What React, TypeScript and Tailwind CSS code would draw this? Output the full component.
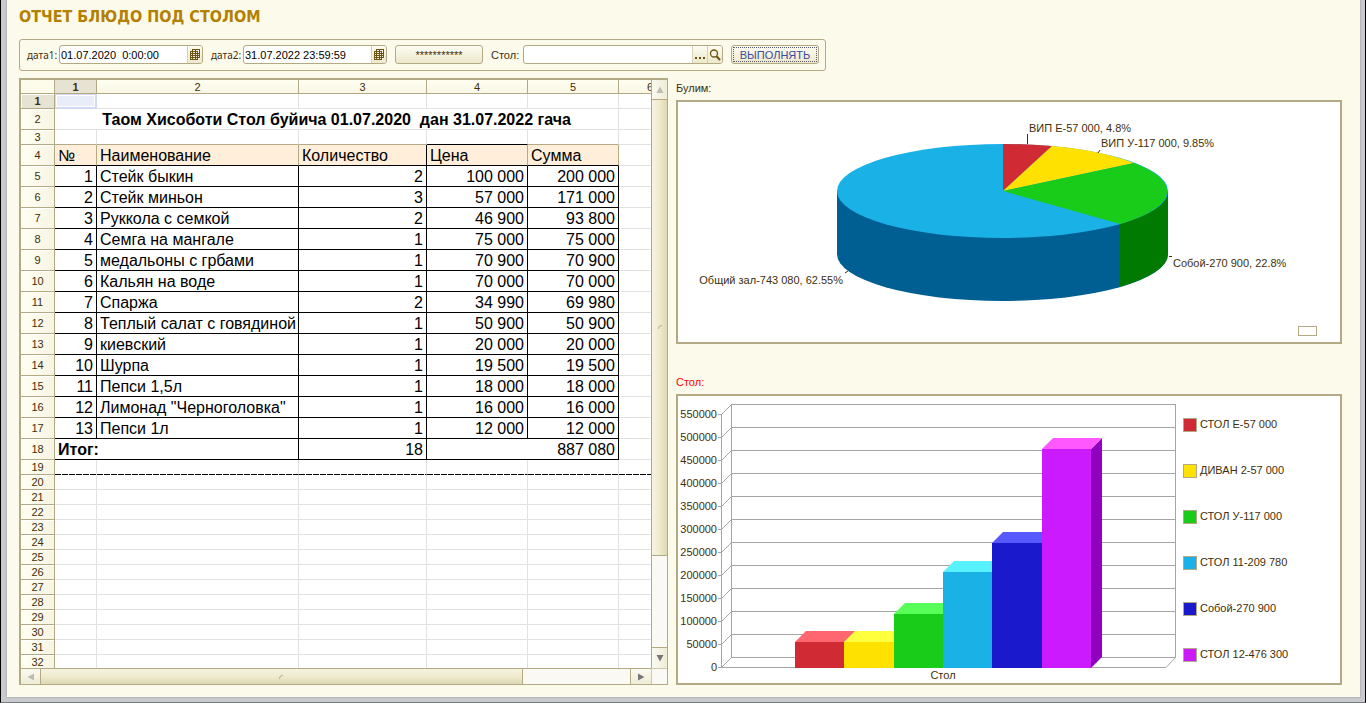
import { useState } from 'react';

interface Dish {
  name: string;
  count: number;
  price: string;
  sum: string;
}

interface Bar {
  label: string;
  x: number;
  y: number;
  width: number;
  front: string;
  top: string;
  side: string;
}

const dishes: Dish[] = [
  { name: 'Стейк быкин', count: 2, price: '100 000', sum: '200 000' },
  { name: 'Стейк миньон', count: 3, price: '57 000', sum: '171 000' },
  { name: 'Руккола с семкой', count: 2, price: '46 900', sum: '93 800' },
  { name: 'Семга на мангале', count: 1, price: '75 000', sum: '75 000' },
  { name: 'медальоны с грбами', count: 1, price: '70 900', sum: '70 900' },
  { name: 'Кальян на воде', count: 1, price: '70 000', sum: '70 000' },
  { name: 'Спаржа', count: 2, price: '34 990', sum: '69 980' },
  { name: 'Теплый салат с говядиной', count: 1, price: '50 900', sum: '50 900' },
  { name: 'киевский', count: 1, price: '20 000', sum: '20 000' },
  { name: 'Шурпа', count: 1, price: '19 500', sum: '19 500' },
  { name: 'Пепси 1,5л', count: 1, price: '18 000', sum: '18 000' },
  { name: 'Лимонад "Черноголовка"', count: 1, price: '16 000', sum: '16 000' },
  { name: 'Пепси 1л', count: 1, price: '12 000', sum: '12 000' },
];

const bars: Bar[] = [
  { label: 'СТОЛ Е-57 000', x: 117, y: 246, width: 49, front: '#d02b35', top: '#ff666f', side: '#8f0000' },
  { label: 'ДИВАН 2-57 000', x: 166, y: 246, width: 50, front: '#ffe100', top: '#ffff3e', side: '#bfa000' },
  { label: 'СТОЛ У-117 000', x: 216, y: 218, width: 49, front: '#1acc1a', top: '#58ff58', side: '#007a00' },
  { label: 'СТОЛ 11-209 780', x: 265, y: 176, width: 49, front: '#1ab1e6', top: '#58f2ff', side: '#005f92' },
  { label: 'Собой-270 900', x: 314, y: 147, width: 50, front: '#1a1acc', top: '#5858ff', side: '#00008f' },
  { label: 'СТОЛ 12-476 300', x: 364, y: 53, width: 49, front: '#cc1aff', top: '#ff58ff', side: '#8f00bf' },
];

const axis = [550000, 500000, 450000, 400000, 350000, 300000, 250000, 200000, 150000, 100000, 50000, 0];
const emptyRows = [20, 21, 22, 23, 24, 25, 26, 27, 28, 29, 30, 31, 32];

const line = 'border-[#e2e2e2]';
const raised = 'bg-linear-to-b from-[#fdfcf2] to-[#ece8cc]';

function RowHead({ n, active }: { n: number; active?: boolean }) {
  return (
    <th
      scope="row"
      className={`border-r border-b border-[#b3a985] p-0 text-center text-[11px] leading-[14px] text-[#3f2f0a] shadow-[inset_1px_1px_0_#ffffff] ${
        active ? 'bg-[#e6e3d3] font-bold' : 'bg-linear-to-r from-[#fffff2] to-[#f7f4e4] font-normal'
      }`}
    >
      {n}
    </th>
  );
}

function Blank({ count, border = line }: { count: number; border?: string }) {
  return (
    <>
      {Array.from({ length: count }, (_, i) => (
        <td key={i} className={`border-r border-b p-0 ${border}`}></td>
      ))}
    </>
  );
}

function Sheet() {
  const cell = 'border-r border-b border-black px-[3px] pt-px pb-0';

  return (
    <table className="w-[661px] table-fixed border-separate border-spacing-0 bg-white text-base leading-[19px] whitespace-nowrap text-black">
      <colgroup>
        <col className="w-[34px]" />
        <col className="w-[42px]" />
        <col className="w-[202px]" />
        <col className="w-[128px]" />
        <col className="w-[101px]" />
        <col className="w-[91px]" />
        <col className="w-[63px]" />
      </colgroup>
      <thead>
        <tr>
          <td className="border-r border-b border-[#b3a985] bg-[#fdfceb] p-0"></td>
          {[1, 2, 3, 4, 5, 6].map(n => (
            <th
              key={n}
              scope="col"
              className={`border-r border-b border-[#b3a985] px-0 pt-px pb-0 text-center text-[11px] leading-3 text-[#3f2f0a] ${
                n === 1 ? 'bg-[#e6e3d3] font-bold' : 'bg-linear-to-b from-[#fffff2] to-[#f9f6e4] font-normal'
              }`}
            >
              {n}
            </th>
          ))}
        </tr>
      </thead>
      <tbody>
        <tr>
          <RowHead n={1} active />
          <td className="border-r border-b border-[#d3d9ee] bg-[#e9edf9] p-0 shadow-[inset_0_0_0_1px_#d3d9ee,inset_0_0_0_2px_#ffffff]"></td>
          <Blank count={5} />
        </tr>
        <tr>
          <RowHead n={2} />
          <td colSpan={5} className={`border-r border-b px-0 pt-px pb-0 text-center font-bold whitespace-pre ${line}`}>
            {'Таом Хисоботи Стол буйича 01.07.2020  дан 31.07.2022 гача'}
          </td>
          <Blank count={1} />
        </tr>
        <tr>
          <RowHead n={3} />
          {[1, 2, 3, 4, 5].map(n => (
            <td key={n} className={`border-r border-b border-r-[#e2e2e2] p-0 ${n === 4 ? 'border-b-black' : 'border-b-[#b3a985]'}`}></td>
          ))}
          <Blank count={1} />
        </tr>
        <tr>
          <RowHead n={4} />
          {['№', 'Наименование', 'Количество', 'Цена', 'Сумма'].map(title => (
            <td
              key={title}
              className={`border-r border-b border-b-black bg-[#ffeed9] px-[3px] pt-px pb-0 ${
                title === 'Количество' ? 'border-r-black' : 'border-r-[#b3a985]'
              }`}
            >
              {title}
            </td>
          ))}
          <Blank count={1} />
        </tr>
        {dishes.map((dish, i) => (
          <tr key={dish.name}>
            <RowHead n={i + 5} />
            <td className={`${cell} text-right`}>{i + 1}</td>
            <td className={cell}>{dish.name}</td>
            <td className={`${cell} text-right`}>{dish.count}</td>
            <td className={`${cell} text-right`}>{dish.price}</td>
            <td className={`${cell} text-right`}>{dish.sum}</td>
            <Blank count={1} />
          </tr>
        ))}
        <tr>
          <RowHead n={18} />
          <td colSpan={2} className={`${cell} font-bold`}>Итог:</td>
          <td className={`${cell} text-right`}>18</td>
          <td colSpan={2} className={`${cell} text-right`}>887 080</td>
          <Blank count={1} />
        </tr>
        <tr>
          <RowHead n={19} />
          <Blank
            count={6}
            border="border-r-[#e2e2e2] border-b-transparent bg-[repeating-linear-gradient(90deg,#000000_0_6px,#ffffff_6px_7px)] bg-[length:100%_1px] bg-bottom bg-no-repeat bg-origin-border"
          />
        </tr>
        {emptyRows.map(n => (
          <tr key={n}>
            <RowHead n={n} />
            <Blank count={6} />
          </tr>
        ))}
      </tbody>
    </table>
  );
}

function Arrow({ d, muted }: { d: string; muted?: boolean }) {
  return (
    <svg width="8" height="8" viewBox="0 0 8 8">
      <path d={d} fill={muted ? '#bdbdb4' : '#77777a'} />
    </svg>
  );
}

function SheetPanel() {
  return (
    <div className="grid w-[649px] shrink-0 grid-cols-[minmax(0,1fr)_16px] grid-rows-[minmax(0,1fr)_16px] border-t-2 border-r border-b border-l-2 border-[#b3a985] bg-[#faf9f3]">
      <div className="overflow-hidden">
        <Sheet />
      </div>
      <div className="flex flex-col border-l border-[#b3a985]">
        <button aria-label="Вверх" className="flex h-5 items-center justify-center border-b border-[#b3a985] bg-linear-to-r from-[#fbfaf1] to-[#efecd6]">
          <Arrow d="M4 0.5 L7.5 7 L0.5 7 Z" muted />
        </button>
        <div className="min-h-0 flex-1">
          <div className="flex h-5/6 items-center justify-center border-b border-[#b3a985] bg-linear-to-r from-[#f6f3e2] via-[#efebcd] to-[#ddd8b4]">
            <span className="size-1 rounded-tl-sm border-t border-l border-[#b9b59a]"></span>
          </div>
        </div>
        <button aria-label="Вниз" className="flex h-[21px] items-center justify-center border-t border-[#b3a985] bg-linear-to-r from-[#fbfaf1] to-[#efecd6]">
          <Arrow d="M4 7.5 L7.5 1 L0.5 1 Z" />
        </button>
      </div>
      <div className="flex border-t border-[#b3a985]">
        <button aria-label="Влево" className="flex w-5 items-center justify-center border-r border-[#b3a985] bg-linear-to-b from-[#fbfaf1] to-[#efecd6]">
          <Arrow d="M0.5 4 L7 0.5 L7 7.5 Z" muted />
        </button>
        <div className="min-w-0 flex-1">
          <div className="flex h-full w-9/11 items-center justify-center border-r border-[#b3a985] bg-linear-to-b from-[#f6f3e2] via-[#efebcd] to-[#ddd8b4]">
            <span className="size-1 rounded-tl-sm border-t border-l border-[#b9b59a]"></span>
          </div>
        </div>
        <button aria-label="Вправо" className="flex w-[21px] items-center justify-center border-l border-[#b3a985] bg-linear-to-b from-[#fbfaf1] to-[#efecd6]">
          <Arrow d="M7.5 4 L1 0.5 L1 7.5 Z" />
        </button>
      </div>
      <div className="border-t border-l border-[#cfc9ab]"></div>
    </div>
  );
}

function CalendarIcon() {
  return (
    <svg width="10" height="11" viewBox="0 0 10 11" fill="none" stroke="#6b5410" shapeRendering="crispEdges">
      <path d="M2 0.5 H9.5 V9" />
      <path d="M0.5 2.5 H7.5 V10.5 H0.5 Z" />
      <path d="M0.5 4.5 H9.5 M0.5 6.5 H9.5 M0.5 8.5 H9.5 M2.5 0.5 V10.5 M5.5 0.5 V10.5" />
    </svg>
  );
}

function SearchIcon() {
  return (
    <svg width="12" height="12" viewBox="0 0 12 12" fill="none" stroke="#6b5410">
      <circle cx="5" cy="4.5" r="3.5" strokeWidth="1.3" />
      <path d="M7.5 7.2 L11 11" strokeWidth="2" />
    </svg>
  );
}

function DateField({ id, label, initial }: { id: string; label: string; initial: string }) {
  const [value, setValue] = useState(initial);

  return (
    <div className="flex shrink-0 items-center">
      <label htmlFor={id} className="w-8 font-['Noto_Sans',sans-serif] text-[10px] whitespace-nowrap">{label}</label>
      <div className="flex h-[19px] w-36 overflow-hidden rounded-[3px] border border-[#b3a985] bg-white">
        <input
          id={id}
          value={value}
          onChange={e => setValue(e.target.value)}
          className="min-w-0 flex-1 px-px text-black outline-none"
        />
        <button aria-label="Выбрать дату" className={`flex w-[15px] items-center justify-center border-l border-[#d8d3b8] ${raised}`}>
          <CalendarIcon />
        </button>
      </div>
    </div>
  );
}

function Toolbar() {
  const [table, setTable] = useState('');

  return (
    <div className="flex h-8 w-[807px] items-center gap-2 rounded-[3px] border border-[#b3a985] pr-1.5 pb-px pl-[7px]">
      <DateField id="date1" label="дата1:" initial="01.07.2020  0:00:00" />
      <DateField id="date2" label="дата2:" initial="31.07.2022 23:59:59" />
      <button className={`h-[19px] w-[88px] shrink-0 rounded-[3px] border border-[#b3a985] leading-3 ${raised}`}>***********</button>
      <div className="flex flex-1 items-center">
        <label htmlFor="table" className="w-8">Стол:</label>
        <div className="flex h-[19px] flex-1 overflow-hidden rounded-[3px] border border-[#b3a985] bg-white">
          <input
            id="table"
            value={table}
            onChange={e => setTable(e.target.value)}
            className="min-w-0 flex-1 px-px text-black outline-none"
          />
          <button aria-label="Выбрать" className={`flex w-[15px] items-end justify-center gap-0.5 border-l border-[#d8d3b8] pb-1 ${raised}`}>
            <span className="size-0.5 bg-[#6b5410]"></span>
            <span className="size-0.5 bg-[#6b5410]"></span>
            <span className="size-0.5 bg-[#6b5410]"></span>
          </button>
          <button aria-label="Найти" className={`flex w-[15px] items-center justify-center border-l border-[#d8d3b8] ${raised}`}>
            <SearchIcon />
          </button>
        </div>
      </div>
      <button className={`h-[19px] w-[88px] shrink-0 rounded-[3px] border border-[#b3a985] p-px text-[#3a4aa0] ${raised}`}>
        <span className="flex h-full items-center justify-center border border-dotted border-[#5a5a6a]">ВЫПОЛНЯТЬ</span>
      </button>
    </div>
  );
}

function PieChart() {
  return (
    <svg viewBox="0 0 662 240" className="block w-full text-[11px]" fill="#3f2f0a">
      <path d="M159 89 V152 A165.5 47 0 0 0 490 152 V89 Z" fill="#005f92" />
      <path d="M442 122 V185 A165.5 47 0 0 0 490 152 V89 Z" fill="#007a00" />
      <ellipse cx="324.5" cy="89" rx="165.5" ry="47" fill="#1ab1e6" />
      <path d="M325 89 L325 42 A165.5 47 0 0 1 374 44 Z" fill="#d02b35" />
      <path d="M325 89 L374 44 A165.5 47 0 0 1 456 61 Z" fill="#ffe100" />
      <path d="M325 89 L456 61 A165.5 47 0 0 1 442 122 Z" fill="#1acc1a" />
      <path d="M349.5 32 V42 M422 48 L420 51 M491 154.5 H494 M170 169 L167 171" stroke="#3f2f0a" fill="none" />
      <text x="351" y="30">ВИП Е-57 000, 4.8%</text>
      <text x="423" y="45">ВИП У-117 000, 9.85%</text>
      <text x="495" y="165">Собой-270 900, 22.8%</text>
      <text x="165" y="182" textAnchor="end">Общий зал-743 080, 62.55%</text>
      <rect x="620.5" y="224.5" width="18" height="9" fill="#ffffff" stroke="#b3a985" />
    </svg>
  );
}

function BarChart() {
  return (
    <div className="flex">
      <svg viewBox="0 0 505 287" className="block min-w-0 flex-1 text-[11px]" fill="#3f2f0a">
        <g stroke="#a5a5a5" fill="none">
          {axis.map((value, i) => (
            <path key={value} d={`M40 ${18.5 + i * 23} H43.5 L53.5 ${8.5 + i * 23} H497.5`} />
          ))}
          <path d="M43.5 18 V272 M53.5 8 V262 M497.5 8 V261.5 L488 271.5 H43" />
        </g>
        {axis.map((value, i) => (
          <text key={value} x="39" y={22 + i * 23} textAnchor="end">{value}</text>
        ))}
        {bars.map(bar => (
          <g key={bar.label}>
            <path d={`M${bar.x + bar.width} ${bar.y} l11 -11 V261 l-11 11 Z`} fill={bar.side} />
            <path d={`M${bar.x} ${bar.y} l11 -11 h${bar.width} l-11 11 Z`} fill={bar.top} />
            <rect x={bar.x} y={bar.y} width={bar.width} height={272 - bar.y} fill={bar.front} />
          </g>
        ))}
        <text x="265" y="283" textAnchor="middle">Стол</text>
      </svg>
      <ul className="flex w-[157px] flex-col gap-8 pt-[22px]">
        {bars.map(bar => (
          <li key={bar.label} className="flex h-3.5 gap-[3px] leading-3 whitespace-nowrap">
            <span className="size-3.5 border border-[#b3a985]" style={{ background: bar.front }}></span>
            {bar.label}
          </li>
        ))}
      </ul>
    </div>
  );
}

export default function App() {
  return (
    <div className="flex h-screen min-h-[703px] flex-col border-x border-b border-x-black border-b-[#77797b] bg-[#c9cacd] pr-[5px] pb-[5px] pl-[6px] font-['Liberation_Sans',sans-serif] text-[11px] leading-4 text-[#3f2f0a]">
      <main className="flex min-h-0 flex-1 flex-col bg-[#fcfaeb] pr-[18px] pb-3 pl-3 shadow-[0_0_2px_#8e9094]">
        <h1 className="h-[39px] pt-[5px] font-['DejaVu_Sans_Condensed','Noto_Sans',sans-serif] text-base leading-6 font-bold text-[#b38000]">ОТЧЕТ БЛЮДО ПОД СТОЛОМ</h1>
        <Toolbar />
        <div className="mt-[7px] flex min-h-0 flex-1 gap-2">
          <SheetPanel />
          <div className="flex min-w-0 flex-1 flex-col">
            <h2 className="h-[22px] pt-0.5">Булим:</h2>
            <section className="border-2 border-[#b3a985] bg-white">
              <PieChart />
            </section>
            <h2 className="mt-7 h-[22px] pt-0.5 text-[#ff0000]">Стол:</h2>
            <section className="border-2 border-[#b3a985] bg-white">
              <BarChart />
            </section>
          </div>
        </div>
      </main>
    </div>
  );
}
